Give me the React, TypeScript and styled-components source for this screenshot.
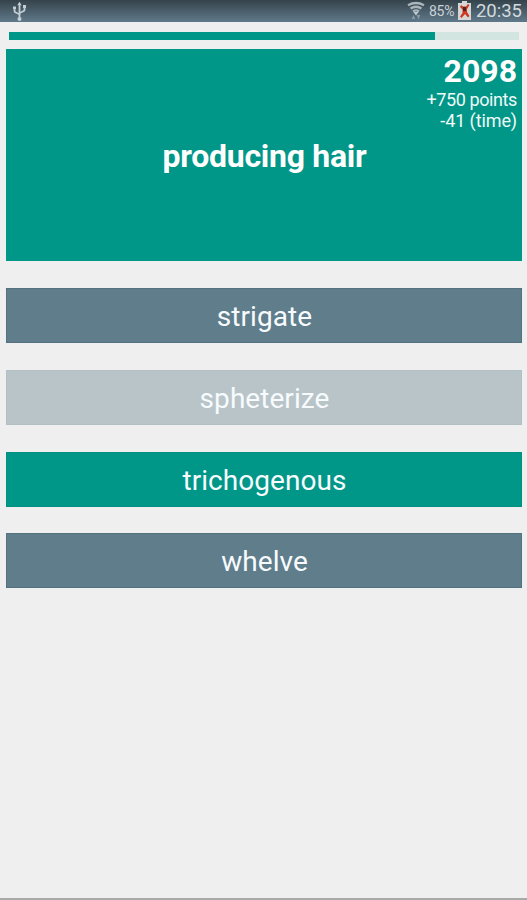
import React from "react";
import styled, { createGlobalStyle } from "styled-components";

const GlobalStyle = createGlobalStyle`
  * { box-sizing: border-box; }
  body { margin: 0; background: #efefef; font-family: Roboto, "Liberation Sans", sans-serif; }
`;

const Screen = styled.div`
  display: flex;
  flex-direction: column;
  width: 527px;
  height: 900px;
  overflow: hidden;
  background: #efefef;
  border-bottom: 2px solid #a9a9a9;
`;

const StatusBar = styled.header`
  display: flex;
  flex: none;
  justify-content: space-between;
  height: 22px;
  padding: 0 5px 0 12px;
  background: linear-gradient(#35434b, #60798a);
  color: #c9d2d7;
`;

const StatusGroup = styled.div`
  display: flex;
  align-items: center;
  height: 22px;
`;

const Percent = styled.span`
  width: 29px;
  margin-left: 4px;
  font-size: 14px;
  line-height: 23px;
  letter-spacing: -0.2px;
  white-space: nowrap;
`;

const Clock = styled.span`
  margin-left: 5px;
  font-size: 18.5px;
  line-height: 22px;
  color: #d2dadf;
`;

const Progress = styled.div`
  flex: none;
  height: 8px;
  margin: 10px 8px 0 9px;
  background: #d2e5e1;
`;

const ProgressFill = styled.div`
  width: 426px;
  height: 100%;
  background: #009688;
`;

const Question = styled.section`
  display: grid;
  flex: none;
  grid-template-rows: 85px 44px 1fr;
  height: 212px;
  margin: 9px 5px 0 6px;
  background: #009688;
  color: #fff;
`;

const Score = styled.div`
  display: flex;
  flex-direction: column;
  align-items: flex-end;
  padding: 5px 5px 0 0;
`;

const Total = styled.strong`
  font-size: 32px;
  line-height: 35px;
`;

const Detail = styled.span<{ $spacing: number }>`
  font-size: 18px;
  line-height: 21px;
  letter-spacing: ${(p) => p.$spacing}px;
  color: #f0fbf9;
`;

const Definition = styled.h1`
  margin: 0;
  padding-left: 1px;
  font-size: 32px;
  font-weight: 700;
  line-height: 45px;
  letter-spacing: -0.28px;
  text-align: center;
`;

const Answers = styled.div`
  display: flex;
  flex-direction: column;
  gap: 26.6px;
  margin: 27.4px 5px 0 6px;
`;

const tones = {
  idle: ["#607d8b", "#547180"],
  faded: ["#b8c4c8", "#b2bfc3"],
  correct: ["#009688", "#009082"],
};

const Answer = styled.button<{ $tone: keyof typeof tones }>`
  height: 55px;
  padding: 2px 0 0 1px;
  border: 1px solid ${(p) => tones[p.$tone][1]};
  background: ${(p) => tones[p.$tone][0]};
  color: #f7fbfd;
  font-family: inherit;
  font-size: 28px;
  line-height: 51px;
  letter-spacing: 0.05px;
`;

const UsbIcon = () => (
  <svg width="15" height="22" viewBox="0 0 15 22" fill="none" stroke="#c3ced5" strokeWidth="1.8">
    <path d="M7.5 4v15M2.5 8v3.2c0 1.8 5 1.8 5 4M12.5 7v3c0 1.8-5 1.8-5 4" />
    <path d="M7.5 1.8l2.2 3.4H5.3zM1 6.5h3v2.6H1zM11 5h3v3h-3z" fill="#c3ced5" stroke="none" />
    <circle cx="7.5" cy="19" r="2" fill="#c3ced5" stroke="none" />
  </svg>
);

const WifiIcon = () => (
  <svg width="18" height="22" viewBox="0 0 18 22" fill="none" stroke="#a9b4bb" strokeWidth="2.3">
    <path d="M1 5.2Q9 .8 17 5.2M3.5 8.5Q9 5 14.5 8.5M6 11.5Q9 9.4 12 11.5" />
    <path d="M6.5 12h5L9 15.5z" fill="#c2cbd0" stroke="none" />
    <path d="M4.8 19l1.7-4 1.7 4zM9.8 15h3.4l-1.7 4.5z" fill="#8c9da7" stroke="none" />
  </svg>
);

const BatteryIcon = () => (
  <svg width="13" height="22" viewBox="0 0 13 22">
    <path d="M0 3h4V1h5v2h4v17H0z" fill="#d4d7d5" />
    <path d="M3 5l2 1.5h3L10 4l1.5 1L9 9v3l2.5 4-1.5 1.5L7 14l-3.5 4L2 16.5 4.5 13V9.5L2 7z" fill="#ce3822" />
    <path d="M5 7h3v4H5z" fill="#52211c" />
  </svg>
);

export default function App() {
  return (
    <>
      <GlobalStyle />
      <Screen>
        <StatusBar>
          <StatusGroup><UsbIcon /></StatusGroup>
          <StatusGroup>
            <WifiIcon />
            <Percent>85%</Percent>
            <BatteryIcon />
            <Clock>20:35</Clock>
          </StatusGroup>
        </StatusBar>
        <Progress><ProgressFill /></Progress>
        <Question>
          <Score>
            <Total>2098</Total>
            <Detail $spacing={-0.4}>+750 points</Detail>
            <Detail $spacing={-0.1}>-41 (time)</Detail>
          </Score>
          <Definition>producing hair</Definition>
        </Question>
        <Answers>
          <Answer $tone="idle">strigate</Answer>
          <Answer $tone="faded">spheterize</Answer>
          <Answer $tone="correct">trichogenous</Answer>
          <Answer $tone="idle">whelve</Answer>
        </Answers>
      </Screen>
    </>
  );
}
